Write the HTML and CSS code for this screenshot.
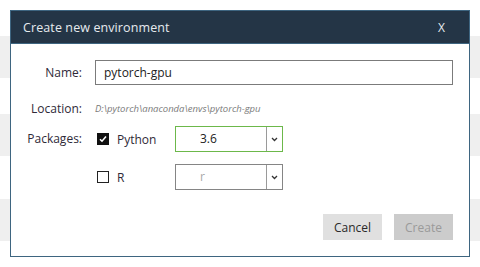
FILE: index.html
```html
<!DOCTYPE html>
<html lang="en">
<head>
  <meta charset="UTF-8" />
  <title>Create new environment</title>
  <link rel="stylesheet" href="styles.css">
</head>
<body>
  <div class="backdrop">
    <div class="row"></div>
    <div class="row grey"></div>
    <div class="row"></div>
    <div class="row grey"></div>
    <div class="row tall"></div>
    <div class="row grey tall"></div>
  </div>

  <div class="dialog">
    <div class="dialog-header">
      <span>Create new environment</span>
      <span class="close">X</span>
    </div>
    <div class="dialog-body">
      <div class="field name-row">
        <label class="field-label">Name:</label>
        <input class="text-input" type="text" value="pytorch-gpu" />
      </div>
      <div class="field location-row">
        <span class="field-label">Location:</span>
        <span class="location">D:\pytorch\anaconda\envs\pytorch-gpu</span>
      </div>
      <div class="field packages-row">
        <span class="field-label">Packages:</span>
        <div class="packages">
          <div class="pkg">
            <span class="check checked">
              <svg width="10" height="10" viewBox="0 0 10 10"><path d="M2 5.2 L4 7.2 L8 2.6" fill="none" stroke="#fff" stroke-width="1.6"/></svg>
            </span>
            <span class="pkg-name">Python</span>
            <div class="select active">
              <span class="select-value">3.6</span>
              <span class="select-arrow"><svg width="7" height="5" viewBox="0 0 7 5"><path d="M1 1 L3.5 3.5 L6 1" fill="none" stroke="#333" stroke-width="1.3"/></svg></span>
            </div>
          </div>
          <div class="pkg">
            <span class="check"></span>
            <span class="pkg-name">R</span>
            <div class="select">
              <span class="select-value muted">r</span>
              <span class="select-arrow"><svg width="7" height="5" viewBox="0 0 7 5"><path d="M1 1 L3.5 3.5 L6 1" fill="none" stroke="#333" stroke-width="1.3"/></svg></span>
            </div>
          </div>
        </div>
      </div>
      <div class="buttons">
        <button class="btn">Cancel</button>
        <button class="btn disabled">Create</button>
      </div>
    </div>
  </div>
</body>
</html>
```

FILE: styles.css
```css
body {
  margin: 0;
  background: #fff;
  font-family: 'Open Sans', 'Noto Sans', sans-serif;
  color: #2f2a38;
  width: 480px;
  height: 267px;
  overflow: hidden;
  position: relative;
}

.backdrop .row {
  height: 36px;
}

.backdrop .row.grey {
  height: 42px;
  background: #efefef;
}

.backdrop .row.tall {
  height: 43px;
}

.backdrop .row.grey.tall {
  height: 42px;
}

/* Dialog */
.dialog {
  position: absolute;
  left: 10px;
  top: 10px;
  width: 458px;
  height: 245px;
  border: 1px solid #3e6580;
  background: #fff;
  box-sizing: content-box;
}

.dialog-header {
  height: 32px;
  background: #243546;
  border-bottom: 1px solid #3e6580;
  color: #e6ebef;
  font-size: 12.5px;
  letter-spacing: 0.1px;
  display: flex;
  align-items: center;
  justify-content: space-between;
  padding: 0 24px 0 12px;
}

.close {
  font-size: 12px;
}

.dialog-body {
  padding: 16px 16px 0 0;
}

.field {
  display: grid;
  grid-template-columns: 71px 1fr;
  column-gap: 13px;
  align-items: center;
}

.field-label {
  text-align: right;
  font-size: 12px;
}

.text-input {
  height: 25px;
  box-sizing: border-box;
  border: 1px solid #7b7b7b;
  padding: 0 8px;
  font-family: inherit;
  font-size: 12px;
  color: #222;
  outline: none;
}

.location-row {
  margin-top: 15px;
  height: 16px;
}

.location {
  font-style: italic;
  font-size: 9.5px;
  color: #7a7a7a;
}

.packages-row {
  margin-top: 10px;
  align-items: start;
}

.packages-row .field-label {
  margin-top: 4px;
}

.packages {
  display: flex;
  flex-direction: column;
  gap: 12px;
}

.pkg {
  display: flex;
  align-items: center;
}

.check {
  width: 12px;
  height: 12px;
  box-sizing: border-box;
  border: 1.5px solid #222;
  margin-left: 2px;
  background: #fff;
  display: flex;
  align-items: center;
  justify-content: center;
}

.check.checked {
  background: #111;
  border-color: #111;
}

.pkg-name {
  font-size: 12px;
  margin-left: 8px;
  width: 58px;
}

.select {
  width: 108px;
  height: 26px;
  box-sizing: border-box;
  border: 1px solid #858585;
  display: flex;
}

.select.active {
  border-color: #6cb84a;
}

.select-value {
  flex: 1;
  font-size: 12px;
  padding-left: 24px;
  line-height: 24px;
  color: #222;
}

.select-value.muted {
  color: #a8a8a8;
}

.select-arrow {
  width: 15px;
  border-left: 1px solid #9a9a9a;
  display: flex;
  align-items: center;
  justify-content: center;
}

.buttons {
  margin-top: 24px;
  display: flex;
  justify-content: flex-end;
  gap: 12px;
}

.btn {
  width: 59px;
  height: 26px;
  border: none;
  background: #e0e0e0;
  font-family: inherit;
  font-size: 12px;
  color: #2a2a2a;
  padding: 0;
}

.btn.disabled {
  background: #cccccc;
  color: #9a9a9a;
}
```
